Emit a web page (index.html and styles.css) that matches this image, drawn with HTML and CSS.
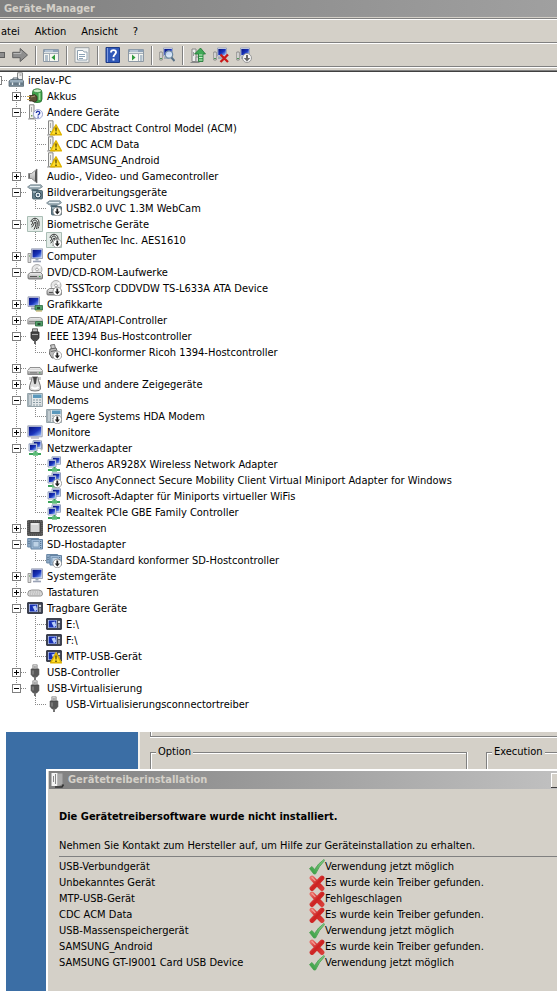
FILE: index.html
```html
<!DOCTYPE html>
<html lang="de">
<head>
<meta charset="utf-8">
<title>Geräte-Manager</title>
<link rel="stylesheet" href="styles.css">
</head>
<body>
<svg class="sprite" aria-hidden="true">
  <defs>
    <linearGradient id="g-metal" x1="0" y1="0" x2="0" y2="1"><stop offset="0" stop-color="#f4f4f4"/><stop offset="1" stop-color="#9a9a9a"/></linearGradient>
    <linearGradient id="g-screen" x1="0" y1="0" x2="1" y2="1"><stop offset="0" stop-color="#06127c"/><stop offset=".55" stop-color="#1a34bc"/><stop offset=".8" stop-color="#5c80e0"/><stop offset="1" stop-color="#b4ccf6"/></linearGradient>
    <linearGradient id="g-check" x1="1" y1="0" x2="0" y2="1"><stop offset="0" stop-color="#8ed08e"/><stop offset="1" stop-color="#2f9a3c"/></linearGradient>
    <linearGradient id="g-cross" x1="0" y1="0" x2="1" y2="1"><stop offset="0" stop-color="#e86a64"/><stop offset=".5" stop-color="#cc2222"/><stop offset="1" stop-color="#d83c38"/></linearGradient>
    <symbol id="o-down" viewBox="0 0 16 16"><circle cx="11.3" cy="11.5" r="4.3" fill="#fff" stroke="#8a8a8a" stroke-width=".8"/><path d="M10.400 8.500h1.800v3h1.700l-2.600 3-2.600-3h1.700z" fill="#222"/></symbol>
    <symbol id="o-warn" viewBox="0 0 16 16"><path d="M10 4.800 15.400 14.800H4.600z" fill="#ffdf2b" stroke="#e0b400" stroke-width="1.400" stroke-linejoin="round"/><path d="M9.300 7.500h1.400l-.2 4h-1zM9.300 12.500h1.400v1.400H9.300z" fill="#4a3a00"/></symbol>
    <symbol id="tower" viewBox="0 0 16 16"><path d="M2.500.8h4.500v13.700h-4.500z" fill="#f2f2ee" stroke="#888"/><path d="M7.500 14.200V7.500q2-1.500 4 0v6.700z" fill="#ddd" stroke="#888" stroke-width=".8"/><path d="M4.500 3v5" stroke="#aaa"/><path d="M4 11h1.400v1.500H4z" fill="#6d9b57"/><path d="M1 15h8" stroke="#999"/></symbol>
    <symbol id="root" viewBox="0 0 16 16"><path d="M9.500.8h5v9h-5z" fill="#eee" stroke="#888"/><path d="M11.500 3h2" stroke="#888"/><path d="M5 8V6h5v2" fill="none" stroke="#566573"/><path d="M1 9 3 7.500h11l1.500 1.500v5.300H1z" fill="#7c909f" stroke="#55646f" stroke-width=".8"/><path d="M2 9h13" stroke="#b9cbd8"/><path d="M2 12h13" stroke="#55646f"/><path d="M4.500 10.500v2.500M11.500 10.500v2.500" stroke="#e4ebef" stroke-width="1.300"/></symbol>
    <symbol id="battery" viewBox="0 0 16 16"><rect x="5.500" y="1" width="9.500" height="13.500" rx="3.500" fill="#3fa34a" stroke="#226b2b" stroke-width=".8"/><ellipse cx="10.300" cy="2.800" rx="4" ry="1.800" fill="#c9eec5" stroke="#2d7a36" stroke-width=".6"/><path d="M12.500 5v7" stroke="#9ddc9a" stroke-width="1.800"/><path d="M2.500 7.500h2.500l2.500-1 2.500 2v4l-2.500 1.500-2.500-1H2.500z" fill="#5d5036" stroke="#35281c" stroke-width=".8"/><path d="M4 9l4-1" stroke="#a6956c"/><path d="M0 8.500h3M0 11.500h3" stroke="#d3a94f" stroke-width="1.200"/></symbol>
    <symbol id="unknown" viewBox="0 0 16 16"><use href="#tower"/><circle cx="11" cy="10.200" r="4.600" fill="#f4f6ff" stroke="#8a94c8" stroke-width=".8"/><path d="M9.300 9c0-2.400 3.600-2.200 3.400 0 0 1.200-1.600 1.200-1.600 2.400M11.100 12.400v1.300" fill="none" stroke="#2036a8" stroke-width="1.300"/></symbol>
    <symbol id="speaker" viewBox="0 0 16 16"><path d="M1.500 5.500H4.500L10 1v14l-5.500-4.500H1.500z" fill="url(#g-metal)" stroke="#777" stroke-width=".8"/><path d="M8 3.500 10 1v14l-2-2.500z" fill="#555"/><path d="M2.500 6v4" stroke="#666"/></symbol>
    <symbol id="camera" viewBox="0 0 16 16"><path d="M.5 3 3.500.8h10.500l1.500 2-3 2H3z" fill="#9fb0b8" stroke="#6b7d86" stroke-width=".7"/><path d="M3 2.500h10" stroke="#e6eef2"/><path d="M4.500 5h7v2h-7z" fill="#5d7581"/><rect x="5.500" y="6.500" width="10" height="8.500" rx="1" fill="#64818f" stroke="#3e5661" stroke-width=".8"/><circle cx="11" cy="11" r="3" fill="#dce8ee" stroke="#334a55"/><circle cx="11" cy="11" r="1.100" fill="#2c4a63"/><path d="M6 8h3" stroke="#d7e3e8"/></symbol>
    <symbol id="finger" viewBox="0 0 16 16"><path d="M.5.5h15v15H.5z" fill="#e3ebe7" stroke="#a9bdb4"/><g fill="none" stroke="#333" stroke-width="1"><path d="M4 6C4.500 1 11.500 1 12 6v4"/><path d="M4 9c3-1 0-5 4-5 3 0 2.500 5 1.500 9"/><path d="M4.500 11c3-1 2-5 3.500-5s1 4-1 7.500"/><path d="M11 12.500l.7-2"/></g></symbol>
    <symbol id="computer" viewBox="0 0 16 16"><path d="M1 5.500h2.800v9H1z" fill="#ddd" stroke="#888" stroke-width=".8"/><path d="M2 8h1" stroke="#4e8f4e"/><path d="M4.500.800h11v9.700h-11z" fill="#dfe3ee" stroke="#8b93a8" stroke-width=".8"/><path d="M5.500 1.800h9v7.700h-9z" fill="url(#g-screen)"/><path d="M8.500 10.500h3v2h-3z" fill="#9ab"/><path d="M6 13.500h8" stroke="#9aa2b5" stroke-width="1.600"/></symbol>
    <symbol id="dvd" viewBox="0 0 16 16"><circle cx="10" cy="5.500" r="5" fill="#e6e6e6" stroke="#999" stroke-width=".8"/><path d="M10 5.500 13.500 2.500M10 5.500 6.500 8" stroke="#fff" stroke-width="1.500"/><circle cx="10" cy="5.500" r="1.400" fill="#fff" stroke="#888" stroke-width=".7"/><path d="M1 10.500 3.500 8.500h10l2 2V14q0 1-1 1H2q-1 0-1-1z" fill="url(#g-metal)" stroke="#666" stroke-width=".8"/><path d="M3 12.500h7" stroke="#555"/><path d="M12 12.500h1.500" stroke="#3b9a4b"/></symbol>
    <symbol id="gpu" viewBox="0 0 16 16"><path d="M1 .8h11.500v9.700H1z" fill="#dde" stroke="#8b93a8" stroke-width=".8"/><path d="M2 1.800h9.500v7.700H2z" fill="url(#g-screen)"/><path d="M4 12.500h5" stroke="#9aa4b5" stroke-width="2"/><path d="M8 9.500h7.500v4.500H8z" fill="#54a06a" stroke="#2a6b3f" stroke-width=".8"/><path d="M10 11h3v2h-3z" fill="#294b35"/><path d="M9 15h6" stroke="#b8a44a"/></symbol>
    <symbol id="ide" viewBox="0 0 16 16"><path d="M.8 7.500q1-2 3-2h9q2 0 2.500 2v4.500H.8z" fill="url(#g-metal)" stroke="#888" stroke-width=".8"/><path d="M2 9.500h6" stroke="#888"/><path d="M8.500 9.500h7v4.500h-7z" fill="#54a06a" stroke="#2a6b3f" stroke-width=".8"/><path d="M10.500 11h3v2h-3z" fill="#294b35"/></symbol>
    <symbol id="plug" viewBox="0 0 16 16"><path d="M5.800.8h4.400v4.500H5.800z" fill="#e4e4e4" stroke="#888" stroke-width=".8"/><path d="M7.200 2v2M8.900 2v2" stroke="#777" stroke-width=".8"/><path d="M4.200 5h7.600v5.500l-1.800 2.300H6l-1.800-2.300z" fill="#585858" stroke="#444" stroke-width=".8"/><path d="M6 6.500v4" stroke="#999"/><path d="M8 12.500v3.500" stroke="#666" stroke-width="1.800"/></symbol>
    <symbol id="firewire" viewBox="0 0 16 16"><path d="M5.500.8h5V4h-5z" fill="#bbb" stroke="#444" stroke-width=".8"/><path d="M4 4h8v6l-2 2.500H6L4 10z" fill="#484848" stroke="#2c2c2c" stroke-width=".8"/><path d="M5 6.500h6" stroke="#aaa"/><path d="M8 12v4" stroke="#555" stroke-width="1.800"/></symbol>
    <symbol id="firewire-light" viewBox="0 0 16 16"><path d="m4.500 1 4-.5 1 4-4 .5z" fill="#ccc" stroke="#555" stroke-width=".8"/><path d="m4 5 6-1 2 5.500-2 4-4 .5-2.500-4z" fill="#bbb" stroke="#666"/><path d="M5 7.500l5-1" stroke="#666"/></symbol>
    <symbol id="drive" viewBox="0 0 16 16"><path d="M.8 10.500 3 7.500h10l2.300 3v4H.8z" fill="url(#g-metal)" stroke="#777" stroke-width=".8"/><path d="M1 10.500h14" stroke="#eee"/><path d="M3 12.800h7" stroke="#777"/><path d="M12 12.800h1.500" stroke="#3b9a4b"/></symbol>
    <symbol id="mouse" viewBox="0 0 16 16"><path d="M5 1C5 6 2 8 2.500 13q0 2 5.500 2t5.500-2C14 8 11 6 11 1z" fill="#dcdcdc" stroke="#666" stroke-width=".9"/><path d="M6 1h4L9 7.500q-1 1.500-2 0z" fill="#444"/><path d="M4.500 11q3.500 3 7 0" fill="none" stroke="#fff" stroke-width="2"/><path d="M3 4V1M13 4V1" stroke="#999"/></symbol>
    <symbol id="modem" viewBox="0 0 16 16"><path d="M.6 1.500h14.800v13H.6z" fill="#e2e7e9" stroke="#8898a0" stroke-width=".9"/><path d="M1.500 2.500h3v11h-3z" fill="#c3cdd2" stroke="#84949c" stroke-width=".6"/><path d="M6 2.500h8.500v3.500H6z" fill="#5a98bc"/><path d="M6 8h8M6 10.500h8M6 13h8" stroke="#8799a2" stroke-width="1.200" stroke-dasharray="2 1"/></symbol>
    <symbol id="monitor" viewBox="0 0 16 16"><path d="M.8 1.800h14.400v11H.8z" fill="#dfe3ee" stroke="#8b93a8" stroke-width=".8"/><path d="M1.800 2.800h12.400v9H1.800z" fill="url(#g-screen)"/><path d="M4 14h8" stroke="#aab" stroke-width="1.300"/></symbol>
    <symbol id="net" viewBox="0 0 16 16"><path d="M6 .8h8.500v7.500H6z" fill="#dde6f6" stroke="#8290b0" stroke-width=".8"/><path d="M7 1.800h6.500v5.500H7z" fill="url(#g-screen)"/><path d="M2 3.800h8v7.200H2z" fill="#dde6f6" stroke="#8290b0" stroke-width=".8"/><path d="M3 4.800h6v5.200H3z" fill="url(#g-screen)"/><path d="M8.500 11v3M2 14h12" stroke="#3ca45b" stroke-width="2"/><path d="M6 14h5" stroke="#5cbc78" stroke-width="3.400"/></symbol>
    <symbol id="netarc" viewBox="0 0 16 16"><path d="M7 1q4-2 7 2t0 7" fill="none" stroke="#bbb" stroke-width="1.800"/><use href="#net"/></symbol>
    <symbol id="cpu" viewBox="0 0 16 16"><path d="M.7.7h14.600v14.600H.7z" fill="#555" stroke="#333"/><path d="M1 1h14v14H1z" fill="none" stroke="#777" stroke-dasharray="1 1"/><path d="M3 2.500h10v10H3z" fill="#d3d3d3" stroke="#333" stroke-width=".8"/><path d="M4 4h7" stroke="#fff"/></symbol>
    <symbol id="sd" viewBox="0 0 16 16"><path d="M.7 2.500h11v8.500h-11z" fill="#8ea9c5" stroke="#6a88a6"/><path d="M4 3.500h11.500v9.500H4z" fill="#9db9d6" stroke="#6583a2"/><path d="M6 5.500h6v5.500H6z" fill="#bdd2e6" stroke="#7492b0" stroke-width=".8"/><path d="M13.700 5v7M2 5v4" stroke="#45627f" stroke-dasharray="1 1"/></symbol>
    <symbol id="keyboard" viewBox="0 0 16 16"><path d="M.7 10q0-4 4-4h7q3.800 0 3.800 4-.2 2-2 2H2.500Q.7 12 .7 10z" fill="#ddd" stroke="#888" stroke-width=".9"/><path d="M3 8h10.500M2.500 10h11" stroke="#aaa" stroke-dasharray="1.500 .8"/></symbol>
    <symbol id="portable" viewBox="0 0 16 16"><path d="M.7 2.700h14.600v10.600H.7z" fill="#454b5c" stroke="#1e2230"/><path d="M2 4h8.800v8H2z" fill="#c9d6ee"/><path d="M2.700 4.500h7.500v7H2.700z" fill="#1730b4"/><path d="m5.500 6.500 3.500-1 1.200 4-2.200 2z" fill="#b9cdf8"/><circle cx="13" cy="6" r="1.200" fill="#ddd"/><path d="M12 9h2M12 11h2" stroke="#ddd"/></symbol>
    <symbol id="panel" viewBox="0 0 16 16"><path d="M.5 2.500h15v12H.5z" fill="#f7f7f2" stroke="#8d99a5"/><path d="M1 4h14" stroke="#8ea2b8" stroke-width="2.400"/><path d="M2 4h8" stroke="#d9e3ec"/><path d="M1 6.500h14" stroke="#a5afb8"/></symbol>
    <symbol id="tree-pane" viewBox="0 0 16 16"><use href="#panel"/><path d="M6.500 7v7" stroke="#a5afb8"/><path d="M2 9h3M2 11h3M2 13h3" stroke="#6e8aa6"/><path d="M12 7.500v6L8.500 10.500z" fill="#2f9a3c"/></symbol>
    <symbol id="action-pane" viewBox="0 0 16 16"><use href="#panel"/><path d="M10.500 7v7" stroke="#a5afb8"/><path d="M12 9h2.500M12 11h2.500M12 13h2.500" stroke="#6e8aa6"/><path d="M4 7.500v6l3.500-3z" fill="#2f9a3c"/></symbol>
    <symbol id="props" viewBox="0 0 16 16"><path d="M1 .7h14v14.600H1z" fill="#eef0f0" stroke="#9b9fa2"/><path d="M3.500 3.500H9l1 1.500h3v8H3.500z" fill="#fff" stroke="#8698a8" stroke-width=".9"/><path d="M5 7.500h6M5 9.500h6M5 11.500h4" stroke="#8ba2b6"/></symbol>
    <symbol id="help" viewBox="0 0 16 16"><path d="M1 .5h13.500v15H1z" fill="#3058b8" stroke="#1c3a86"/><path d="M2.500 1v14" stroke="#7d9ae0"/><path d="M6 5.500C6 2.300 11 2.500 11 5.300c0 2-2.500 2.200-2.500 4.700M8.500 11.500v2" fill="none" stroke="#fff" stroke-width="1.900"/></symbol>
    <symbol id="mini" viewBox="0 0 16 16"><path d="M.8 5h2.400v8H.8z" fill="#eee" stroke="#777" stroke-width=".8"/><path d="M1 11.500h2" stroke="#4f9656"/><path d="M4.500 1h9v8h-9z" fill="#dde3f2" stroke="#8794b0" stroke-width=".7"/><path d="M5.300 2h7.500v6H5.300z" fill="url(#g-screen)"/><path d="M5 11h5" stroke="#99a4b4" stroke-width="1.600"/></symbol>
    <symbol id="scan" viewBox="0 0 16 16"><use href="#mini"/><circle cx="10" cy="7.500" r="3.700" fill="#dcecf9" fill-opacity=".88" stroke="#6b87a0" stroke-width="1.200"/><path d="m12.500 10.500 3 3.500" stroke="#566f86" stroke-width="2"/></symbol>
    <symbol id="update" viewBox="0 0 16 16"><path d="M2 2h4v12.500H2zM.5 15.500h9" fill="#eee" stroke="#888"/><path d="M3.500 5v4" stroke="#999"/><path d="M6 14.500V10h3v4.500z" fill="#ddd" stroke="#888" stroke-width=".8"/><path d="M4.500 7 10.500 1l5 6h-2.500v7.500H8.500V7z" fill="#40a856" stroke="#1e7634" stroke-width=".8"/><path d="M9 8h3.500M9 10.500h3.500M9 13h3.500" stroke="#c7ecc9"/></symbol>
    <symbol id="uninstall" viewBox="0 0 16 16"><use href="#mini"/><path d="m7.500 7.500 7.500 7.500M15 7.500 7.500 15" stroke="#c91818" stroke-width="2.300"/></symbol>
    <symbol id="disable" viewBox="0 0 16 16"><use href="#mini"/><circle cx="11" cy="11" r="4.500" fill="#f3f3f3" stroke="#888" stroke-width=".8"/><path d="M10 8h2v3h2.200L11 14.500 7.800 11H10z" fill="#666"/></symbol>
    <symbol id="forward" viewBox="0 0 16 16"><path d="M.7 5.300h7.500V1.500L15.500 8l-7.300 6.500v-3.800H.7z" fill="#8e8e8e" stroke="#5f5f5f"/><path d="M1.500 6.500h7.500V4" fill="none" stroke="#b8b8b8"/></symbol>
    <symbol id="installer" viewBox="0 0 16 16"><path d="M1.500 1h6v13h-6z" fill="#f4f4f4"/><path d="M3.500 4v6M5.500 2v10" stroke="#888"/><path d="M8 1.500h4.500V12L8 14.500z" fill="#aaa"/><path d="M5 15h7l1.500-2.500" fill="none" stroke="#333" stroke-width="1.500"/></symbol>
    <symbol id="ok" viewBox="0 0 16 16"><path d="M.5 9.500 3 7.500l2.500 3Q9 4.500 15 .5l.8.8Q10 7 6.500 15H4.800z" fill="url(#g-check)" stroke="#46a04e" stroke-width=".8"/></symbol>
    <symbol id="fail" viewBox="0 0 16 16"><path d="m3 3 10 10.500M13 3 3 13.500" stroke="url(#g-cross)" stroke-width="4.800" stroke-linecap="round"/><path d="m3 2.500 3 3" stroke="#f19a94" stroke-width="1.300" stroke-linecap="round"/></symbol>
  </defs>
</svg>

<main class="manager">
  <h1 class="titlebar">Geräte-Manager</h1>
  <nav class="menubar">
    <button>atei</button><button>Aktion</button><button>Ansicht</button><button>?</button>
  </nav>
  <div class="toolbar">
    <button class="back" aria-label="Zurück"></button>
    <button aria-label="Vorwärts"><svg class="icon"><use href="#forward"/></svg></button>
    <span class="sep"></span>
    <button aria-label="Konsolenstruktur"><svg class="icon"><use href="#tree-pane"/></svg></button>
    <span class="sep"></span>
    <button aria-label="Eigenschaften"><svg class="icon"><use href="#props"/></svg></button>
    <span class="sep"></span>
    <button aria-label="Hilfe"><svg class="icon"><use href="#help"/></svg></button>
    <button aria-label="Aktionsbereich"><svg class="icon"><use href="#action-pane"/></svg></button>
    <span class="sep"></span>
    <button aria-label="Suchen"><svg class="icon"><use href="#scan"/></svg></button>
    <span class="sep"></span>
    <button aria-label="Aktualisieren"><svg class="icon"><use href="#update"/></svg></button>
    <button aria-label="Deinstallieren"><svg class="icon"><use href="#uninstall"/></svg></button>
    <button aria-label="Deaktivieren"><svg class="icon"><use href="#disable"/></svg></button>
  </div>

  <ul class="tree">
    <li>
      <div class="row"><button class="box open" aria-label="Reduzieren"></button><svg class="icon"><use href="#root"/></svg>irelav-PC</div>
      <ul>
        <li><div class="row"><button class="box" aria-label="Erweitern"></button><svg class="icon"><use href="#battery"/></svg>Akkus</div></li>
        <li><div class="row"><button class="box open" aria-label="Reduzieren"></button><svg class="icon"><use href="#unknown"/></svg>Andere Geräte</div>
          <ul>
            <li><div class="row leaf"><svg class="icon"><use href="#tower"/><use href="#o-warn"/></svg>CDC Abstract Control Model (ACM)</div></li>
            <li><div class="row leaf"><svg class="icon"><use href="#tower"/><use href="#o-warn"/></svg>CDC ACM Data</div></li>
            <li><div class="row leaf"><svg class="icon"><use href="#tower"/><use href="#o-warn"/></svg>SAMSUNG_Android</div></li>
          </ul></li>
        <li><div class="row"><button class="box" aria-label="Erweitern"></button><svg class="icon"><use href="#speaker"/></svg>Audio-, Video- und Gamecontroller</div></li>
        <li><div class="row"><button class="box open" aria-label="Reduzieren"></button><svg class="icon"><use href="#camera"/></svg>Bildverarbeitungsgeräte</div>
          <ul>
            <li><div class="row leaf"><svg class="icon"><use href="#camera"/><use href="#o-down"/></svg>USB2.0 UVC 1.3M WebCam</div></li>
          </ul></li>
        <li><div class="row"><button class="box open" aria-label="Reduzieren"></button><svg class="icon"><use href="#finger"/></svg>Biometrische Geräte</div>
          <ul>
            <li><div class="row leaf"><svg class="icon"><use href="#finger"/><use href="#o-down"/></svg>AuthenTec Inc. AES1610</div></li>
          </ul></li>
        <li><div class="row"><button class="box" aria-label="Erweitern"></button><svg class="icon"><use href="#computer"/></svg>Computer</div></li>
        <li><div class="row"><button class="box open" aria-label="Reduzieren"></button><svg class="icon"><use href="#dvd"/></svg>DVD/CD-ROM-Laufwerke</div>
          <ul>
            <li><div class="row leaf"><svg class="icon"><use href="#dvd"/><use href="#o-down"/></svg>TSSTcorp CDDVDW TS-L633A ATA Device</div></li>
          </ul></li>
        <li><div class="row"><button class="box" aria-label="Erweitern"></button><svg class="icon"><use href="#gpu"/></svg>Grafikkarte</div></li>
        <li><div class="row"><button class="box" aria-label="Erweitern"></button><svg class="icon"><use href="#ide"/></svg>IDE ATA/ATAPI-Controller</div></li>
        <li><div class="row"><button class="box open" aria-label="Reduzieren"></button><svg class="icon"><use href="#firewire"/></svg>IEEE 1394 Bus-Hostcontroller</div>
          <ul>
            <li><div class="row leaf"><svg class="icon"><use href="#firewire-light"/><use href="#o-down"/></svg>OHCI-konformer Ricoh 1394-Hostcontroller</div></li>
          </ul></li>
        <li><div class="row"><button class="box" aria-label="Erweitern"></button><svg class="icon"><use href="#drive"/></svg>Laufwerke</div></li>
        <li><div class="row"><button class="box" aria-label="Erweitern"></button><svg class="icon"><use href="#mouse"/></svg>Mäuse und andere Zeigegeräte</div></li>
        <li><div class="row"><button class="box open" aria-label="Reduzieren"></button><svg class="icon"><use href="#modem"/></svg>Modems</div>
          <ul>
            <li><div class="row leaf"><svg class="icon"><use href="#modem"/><use href="#o-down"/></svg>Agere Systems HDA Modem</div></li>
          </ul></li>
        <li><div class="row"><button class="box" aria-label="Erweitern"></button><svg class="icon"><use href="#monitor"/></svg>Monitore</div></li>
        <li><div class="row"><button class="box open" aria-label="Reduzieren"></button><svg class="icon"><use href="#netarc"/></svg>Netzwerkadapter</div>
          <ul>
            <li><div class="row leaf"><svg class="icon"><use href="#net"/></svg>Atheros AR928X Wireless Network Adapter</div></li>
            <li><div class="row leaf"><svg class="icon"><use href="#net"/><use href="#o-down"/></svg>Cisco AnyConnect Secure Mobility Client Virtual Miniport Adapter for Windows</div></li>
            <li><div class="row leaf"><svg class="icon"><use href="#net"/></svg>Microsoft-Adapter für Miniports virtueller WiFis</div></li>
            <li><div class="row leaf"><svg class="icon"><use href="#net"/></svg>Realtek PCIe GBE Family Controller</div></li>
          </ul></li>
        <li><div class="row"><button class="box" aria-label="Erweitern"></button><svg class="icon"><use href="#cpu"/></svg>Prozessoren</div></li>
        <li><div class="row"><button class="box open" aria-label="Reduzieren"></button><svg class="icon"><use href="#sd"/></svg>SD-Hostadapter</div>
          <ul>
            <li><div class="row leaf"><svg class="icon"><use href="#sd"/><use href="#o-down"/></svg>SDA-Standard konformer SD-Hostcontroller</div></li>
          </ul></li>
        <li><div class="row"><button class="box" aria-label="Erweitern"></button><svg class="icon"><use href="#computer"/></svg>Systemgeräte</div></li>
        <li><div class="row"><button class="box" aria-label="Erweitern"></button><svg class="icon"><use href="#keyboard"/></svg>Tastaturen</div></li>
        <li><div class="row"><button class="box open" aria-label="Reduzieren"></button><svg class="icon"><use href="#portable"/></svg>Tragbare Geräte</div>
          <ul>
            <li><div class="row leaf"><svg class="icon"><use href="#portable"/></svg>E:\</div></li>
            <li><div class="row leaf"><svg class="icon"><use href="#portable"/></svg>F:\</div></li>
            <li><div class="row leaf"><svg class="icon"><use href="#portable"/><use href="#o-warn"/></svg>MTP-USB-Gerät</div></li>
          </ul></li>
        <li><div class="row"><button class="box" aria-label="Erweitern"></button><svg class="icon"><use href="#plug"/></svg>USB-Controller</div></li>
        <li><div class="row"><button class="box open" aria-label="Reduzieren"></button><svg class="icon"><use href="#plug"/></svg>USB-Virtualisierung</div>
          <ul>
            <li><div class="row leaf"><svg class="icon"><use href="#plug"/></svg>USB-Virtualisierungsconnectortreiber</div></li>
          </ul></li>
      </ul>
    </li>
  </ul>
</main>

<section class="desktop">
  <div class="backwin">
    <div class="group-end"></div>
    <div class="groups">
      <fieldset class="option"><legend>Option</legend></fieldset>
      <fieldset class="execution"><legend>Execution</legend></fieldset>
    </div>
  </div>
  <div class="dialog" role="dialog" aria-labelledby="dlg-title">
    <div class="dialog-title"><svg class="icon"><use href="#installer"/></svg><h2 id="dlg-title">Gerätetreiberinstallation</h2><button class="close" aria-label="Schließen"></button></div>
    <div class="dialog-body">
      <h3>Die Gerätetreibersoftware wurde nicht installiert.</h3>
      <p>Nehmen Sie Kontakt zum Hersteller auf, um Hilfe zur Geräteinstallation zu erhalten.</p>
      <table>
        <tr><td>USB-Verbundgerät</td><td><div class="status"><svg class="icon"><use href="#ok"/></svg>Verwendung jetzt möglich</div></td></tr>
        <tr><td>Unbekanntes Gerät</td><td><div class="status"><svg class="icon"><use href="#fail"/></svg>Es wurde kein Treiber gefunden.</div></td></tr>
        <tr><td>MTP-USB-Gerät</td><td><div class="status"><svg class="icon"><use href="#fail"/></svg>Fehlgeschlagen</div></td></tr>
        <tr><td>CDC ACM Data</td><td><div class="status"><svg class="icon"><use href="#fail"/></svg>Es wurde kein Treiber gefunden.</div></td></tr>
        <tr><td>USB-Massenspeichergerät</td><td><div class="status"><svg class="icon"><use href="#ok"/></svg>Verwendung jetzt möglich</div></td></tr>
        <tr><td>SAMSUNG_Android</td><td><div class="status"><svg class="icon"><use href="#fail"/></svg>Es wurde kein Treiber gefunden.</div></td></tr>
        <tr><td>SAMSUNG GT-I9001 Card USB Device</td><td><div class="status"><svg class="icon"><use href="#ok"/></svg>Verwendung jetzt möglich</div></td></tr>
      </table>
    </div>
  </div>
</section>
</body>
</html>
```
FILE: styles.css
```css
:root {
  --face: #d4d0c8;
  --shade: #808080;
  --dots: repeating-linear-gradient(to bottom, #888 0 1px, transparent 1px 2px);
  --dots-x: repeating-linear-gradient(to right, #888 0 1px, transparent 1px 2px);
}

* { box-sizing: border-box; }

body {
  margin: 0;
  min-height: 100vh;
  display: flex;
  flex-direction: column;
  overflow-x: hidden;
  background: #fff;
  color: #000;
  font: 11px/16px Tahoma, "DejaVu Sans Condensed", "Noto Sans", sans-serif;
}

h1, h2, h3, p, ul, fieldset { margin: 0; padding: 0; }
h1, h2, h3 { font-size: 11px; line-height: 16px; }
button { margin: 0; padding: 0; border: 0; background: none; font: inherit; color: inherit; }
.sprite { position: absolute; width: 0; height: 0; }
.icon { display: block; width: 16px; height: 16px; flex: none; }

.titlebar {
  height: 19px;
  padding-left: 4px;
  line-height: 18px;
  color: var(--face);
  background: linear-gradient(to right, #808080, #a0a0a0);
  border-bottom: 1px solid var(--shade);
  box-shadow: inset 0 -1px var(--face);
}

.menubar {
  display: flex;
  gap: 15px;
  height: 24px;
  padding: 2px 0 0 1px;
  background: var(--face);
  border-top: 1px solid #fff;
  border-bottom: 1px solid var(--shade);
}

.toolbar {
  display: flex;
  align-items: center;
  gap: 7px;
  height: 29px;
  padding-bottom: 5px;
  background: linear-gradient(var(--shade), var(--shade)) 0 22px / 100% 1px no-repeat,
    linear-gradient(#fff, #fff) 0 23px / 100% 1px no-repeat,
    linear-gradient(var(--shade), var(--shade)) 0 100% / 100% 1px no-repeat, var(--face);
  background-origin: padding-box;
  border-top: 1px solid #fff;
  border-bottom: 1px solid #404040;
}

.back { width: 5px; height: 6px; background: #8e8e8e; border: 1px solid #5f5f5f; border-left: 0; }
.sep { width: 1px; height: 19px; background: var(--shade); box-shadow: 1px 0 #fff; }

.tree { margin-left: -7px; padding-bottom: 20px; }
.tree, .tree ul { list-style: none; }
.tree ul { margin-left: 19px; }
.tree ul li { background: var(--dots) 4px 0 / 1px 100% no-repeat; }
.tree ul li:last-child { background-size: 1px 8px; }

.row {
  display: flex;
  align-items: flex-start;
  gap: 4px;
  height: 16px;
  line-height: 18px;
  white-space: nowrap;
  background: var(--dots-x) 9px 8px / 6px 1px no-repeat;
}
.row.leaf { padding-left: 15px; background-position: 4px 8px; background-size: 11px 1px; }

.box {
  width: 9px;
  height: 9px;
  margin: 4px 2px 0 0;
  flex: none;
  border: 1px solid var(--shade);
  background: linear-gradient(#000, #000) center / 5px 1px no-repeat,
    linear-gradient(#000, #000) center / 1px 5px no-repeat, #fff;
}
.box.open { background: linear-gradient(#000, #000) center / 5px 1px no-repeat, #fff; }

.desktop { flex: 1; margin-left: 6px; display: flex; flex-direction: column; background: #3b6ea5; }

.backwin { margin-left: 132px; height: 37px; overflow: hidden; background: var(--face); border-left: 2px solid #f4f2ee; padding-left: 10px; }
.group-end { height: 5px; border: 1px solid var(--shade); border-width: 0 0 1px 1px; box-shadow: 0 1px #fff, inset 1px 0 #fff; }
.groups { display: grid; grid-template-columns: 317px 1fr; column-gap: 19px; padding-top: 7px; }
.groups fieldset { min-width: 0; height: 40px; border: 1px solid var(--shade); box-shadow: 1px 0 #fff, inset 1px 1px #fff; padding: 0 5px; }
.groups .execution { border-right: 0; }
.groups legend { padding: 0 2px; line-height: 16px; background: var(--face); }

.dialog { flex: 1; margin-left: 40px; background: var(--face); border: 2px solid #fff; border-width: 2px 0 0 2px; padding-left: 1px; }
.dialog-title { display: flex; align-items: center; gap: 2px; height: 18px; padding-left: 1px; color: var(--face); background: linear-gradient(to right, #808080, #c0c0c0); }
.dialog-title h2 { line-height: 18px; }
.close { width: 6px; height: 14px; margin-left: auto; background: var(--face); border: 1px solid #fff; border-width: 1px 0 0 1px; box-shadow: 0 1px #404040; }
.dialog-body { padding: 20px 0 0 10px; }
.dialog-body p { margin-top: 13px; padding-bottom: 2px; border-bottom: 1px solid var(--shade); }

table { border-collapse: collapse; margin-top: 2px; }
td { padding: 0; height: 16px; white-space: nowrap; }
td:first-child { width: 250px; }
.status { display: flex; align-items: center; height: 16px; }
```
